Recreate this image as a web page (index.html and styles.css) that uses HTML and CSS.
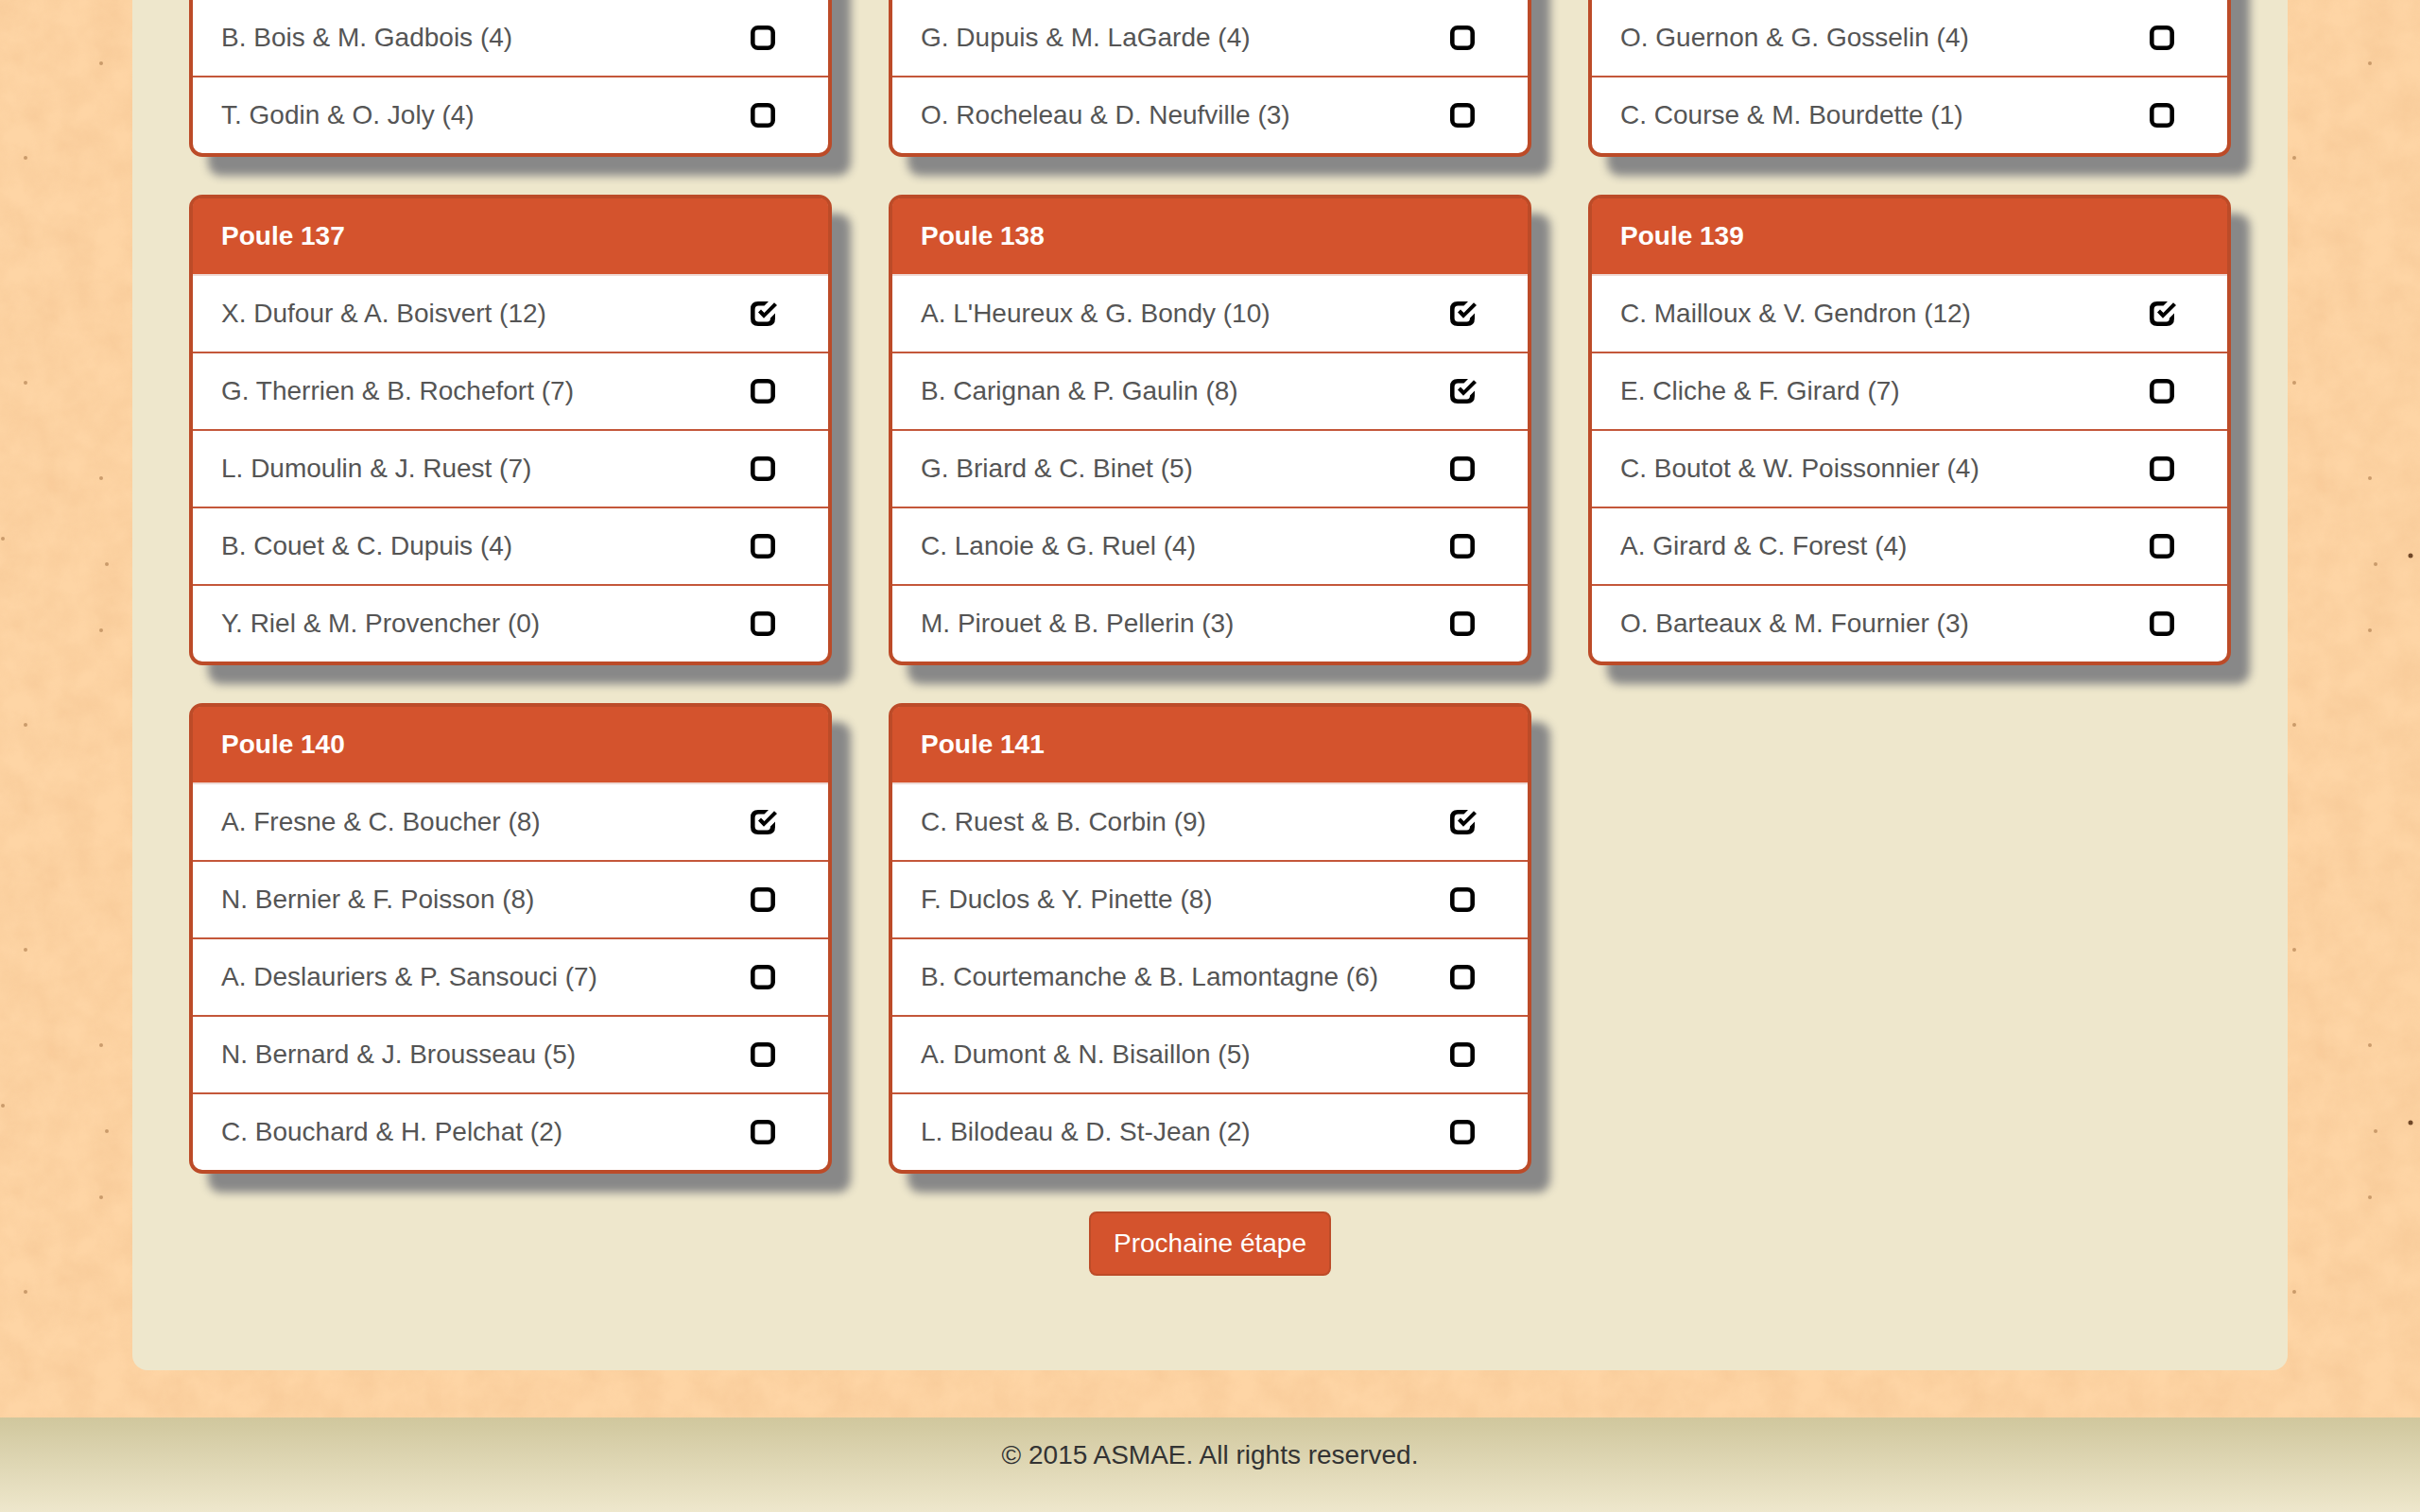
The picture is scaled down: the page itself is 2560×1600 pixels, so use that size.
FILE: index.html
```
<!DOCTYPE html>
<html lang="fr">
<head>
<meta charset="utf-8">
<meta name="viewport" content="width=device-width, initial-scale=1">
<title>ASMAE - Poules</title>
<link rel="stylesheet" href="styles.css">
</head>
<body>
<svg class="sprite" aria-hidden="true">
  <symbol id="box" viewBox="0 0 28 26">
    <rect x="2.300" y="2.300" width="21.400" height="21.400" rx="5.500" fill="none" stroke="#000" stroke-width="4.600"/>
  </symbol>
  <symbol id="box-checked" viewBox="0 0 28 26">
    <path d="M19 0H8Q0 0 0 8v10q0 8 8 8h10q8 0 8-8v-5.500l-5 5Q21 21.400 17.500 21.400h-9Q4.600 21.400 4.600 17.500v-9Q4.600 4.600 8.500 4.600h6z"/>
    <path d="M8 11.500l3-3 3.500 3.500L25 1.200l3 2.900L14 17.700z"/>
  </symbol>
</svg>

<form class="wrap">
  <div class="pools">
    <section class="pool pool-continued">
      <label class="team">B. Bois &amp; M. Gadbois (4)<span class="tick"><input type="checkbox"><svg><use href="#box"/></svg></span></label>
      <label class="team">T. Godin &amp; O. Joly (4)<span class="tick"><input type="checkbox"><svg><use href="#box"/></svg></span></label>
    </section>
    <section class="pool pool-continued">
      <label class="team">G. Dupuis &amp; M. LaGarde (4)<span class="tick"><input type="checkbox"><svg><use href="#box"/></svg></span></label>
      <label class="team">O. Rocheleau &amp; D. Neufville (3)<span class="tick"><input type="checkbox"><svg><use href="#box"/></svg></span></label>
    </section>
    <section class="pool pool-continued">
      <label class="team">O. Guernon &amp; G. Gosselin (4)<span class="tick"><input type="checkbox"><svg><use href="#box"/></svg></span></label>
      <label class="team">C. Course &amp; M. Bourdette (1)<span class="tick"><input type="checkbox"><svg><use href="#box"/></svg></span></label>
    </section>

    <section class="pool">
      <h2 class="pool-title">Poule 137</h2>
      <label class="team">X. Dufour &amp; A. Boisvert (12)<span class="tick"><input type="checkbox" checked><svg><use href="#box-checked"/></svg></span></label>
      <label class="team">G. Therrien &amp; B. Rochefort (7)<span class="tick"><input type="checkbox"><svg><use href="#box"/></svg></span></label>
      <label class="team">L. Dumoulin &amp; J. Ruest (7)<span class="tick"><input type="checkbox"><svg><use href="#box"/></svg></span></label>
      <label class="team">B. Couet &amp; C. Dupuis (4)<span class="tick"><input type="checkbox"><svg><use href="#box"/></svg></span></label>
      <label class="team">Y. Riel &amp; M. Provencher (0)<span class="tick"><input type="checkbox"><svg><use href="#box"/></svg></span></label>
    </section>
    <section class="pool">
      <h2 class="pool-title">Poule 138</h2>
      <label class="team">A. L'Heureux &amp; G. Bondy (10)<span class="tick"><input type="checkbox" checked><svg><use href="#box-checked"/></svg></span></label>
      <label class="team">B. Carignan &amp; P. Gaulin (8)<span class="tick"><input type="checkbox" checked><svg><use href="#box-checked"/></svg></span></label>
      <label class="team">G. Briard &amp; C. Binet (5)<span class="tick"><input type="checkbox"><svg><use href="#box"/></svg></span></label>
      <label class="team">C. Lanoie &amp; G. Ruel (4)<span class="tick"><input type="checkbox"><svg><use href="#box"/></svg></span></label>
      <label class="team">M. Pirouet &amp; B. Pellerin (3)<span class="tick"><input type="checkbox"><svg><use href="#box"/></svg></span></label>
    </section>
    <section class="pool">
      <h2 class="pool-title">Poule 139</h2>
      <label class="team">C. Mailloux &amp; V. Gendron (12)<span class="tick"><input type="checkbox" checked><svg><use href="#box-checked"/></svg></span></label>
      <label class="team">E. Cliche &amp; F. Girard (7)<span class="tick"><input type="checkbox"><svg><use href="#box"/></svg></span></label>
      <label class="team">C. Boutot &amp; W. Poissonnier (4)<span class="tick"><input type="checkbox"><svg><use href="#box"/></svg></span></label>
      <label class="team">A. Girard &amp; C. Forest (4)<span class="tick"><input type="checkbox"><svg><use href="#box"/></svg></span></label>
      <label class="team">O. Barteaux &amp; M. Fournier (3)<span class="tick"><input type="checkbox"><svg><use href="#box"/></svg></span></label>
    </section>

    <section class="pool">
      <h2 class="pool-title">Poule 140</h2>
      <label class="team">A. Fresne &amp; C. Boucher (8)<span class="tick"><input type="checkbox" checked><svg><use href="#box-checked"/></svg></span></label>
      <label class="team">N. Bernier &amp; F. Poisson (8)<span class="tick"><input type="checkbox"><svg><use href="#box"/></svg></span></label>
      <label class="team">A. Deslauriers &amp; P. Sansouci (7)<span class="tick"><input type="checkbox"><svg><use href="#box"/></svg></span></label>
      <label class="team">N. Bernard &amp; J. Brousseau (5)<span class="tick"><input type="checkbox"><svg><use href="#box"/></svg></span></label>
      <label class="team">C. Bouchard &amp; H. Pelchat (2)<span class="tick"><input type="checkbox"><svg><use href="#box"/></svg></span></label>
    </section>
    <section class="pool">
      <h2 class="pool-title">Poule 141</h2>
      <label class="team">C. Ruest &amp; B. Corbin (9)<span class="tick"><input type="checkbox" checked><svg><use href="#box-checked"/></svg></span></label>
      <label class="team">F. Duclos &amp; Y. Pinette (8)<span class="tick"><input type="checkbox"><svg><use href="#box"/></svg></span></label>
      <label class="team">B. Courtemanche &amp; B. Lamontagne (6)<span class="tick"><input type="checkbox"><svg><use href="#box"/></svg></span></label>
      <label class="team">A. Dumont &amp; N. Bisaillon (5)<span class="tick"><input type="checkbox"><svg><use href="#box"/></svg></span></label>
      <label class="team">L. Bilodeau &amp; D. St-Jean (2)<span class="tick"><input type="checkbox"><svg><use href="#box"/></svg></span></label>
    </section>
  </div>
  <button class="next" type="button">Prochaine étape</button>
</form>

<footer class="footer">© 2015 ASMAE. All rights reserved.</footer>
</body>
</html>
```
FILE: styles.css
```
* {
  box-sizing: border-box;
}

body {
  margin: 0;
  min-height: 100vh;
  display: flex;
  flex-direction: column;
  font: 28px/40px "Liberation Sans", Arial, sans-serif;
  color: #333;
  background-color: #fed5a5;
  /* paper grain with a few dark flecks, 600px tile */
  background-image: url("data:image/svg+xml,%3Csvg xmlns='http://www.w3.org/2000/svg' width='600' height='600'%3E%3Cfilter id='n' x='0' y='0' width='100%25' height='100%25' color-interpolation-filters='sRGB'%3E%3CfeTurbulence type='fractalNoise' baseFrequency='.03' numOctaves='4' seed='4' stitchTiles='stitch'/%3E%3CfeColorMatrix values='0 0 0 0 .96 0 0 0 0 .77 0 0 0 0 .57 .8 0 0 0 -.2'/%3E%3C/filter%3E%3Crect width='600' height='600' filter='url(%23n)'/%3E%3Cg fill='%23a87848' fill-opacity='.6'%3E%3Ccircle cx='107' cy='67' r='2'/%3E%3Ccircle cx='27' cy='167' r='2'/%3E%3Ccircle cx='27' cy='405' r='2'/%3E%3Ccircle cx='107' cy='506' r='2'/%3E%3Ccircle cx='3' cy='570' r='2'/%3E%3Ccircle cx='113' cy='597' r='2'/%3E%3C/g%3E%3Ccircle cx='150' cy='588' r='2.500' fill='%23704828'/%3E%3C/svg%3E");
}

.sprite {
  display: none;
}

.wrap {
  margin: 0 140px 50px;
  padding: 0 60px 100px;
  display: flex;
  flex-direction: column;
  gap: 40px;
  background: #eee7cc;
  border-radius: 0 0 16px 16px;
}

.pools {
  display: grid;
  grid-template-columns: repeat(3, 1fr);
  gap: 40px 60px;
}

.pool {
  background: #fff;
  border: 4px solid #bc4b28;
  border-radius: 14px;
  box-shadow: 20px 20px 10px #888;
}

/* upper part of the card lies above the visible area */
.pool-continued {
  margin-top: -46px;
  padding-top: 40px;
}

.pool-title {
  margin: 0;
  padding: 20px 30px;
  font-size: 28px;
  line-height: 40px;
  color: #fff;
  background: #d4532d;
  border-radius: 8px 8px 0 0;
}

.team {
  display: flex;
  align-items: center;
  justify-content: space-between;
  padding: 20px 54px 20px 30px;
  border-top: 2px solid #c4573a;
  color: #555;
}

.pool-title + .team {
  border-top-color: #eedad5;
}

.tick {
  display: grid;
}

.tick > * {
  grid-area: 1 / 1;
  width: 28px;
  height: 26px;
}

.tick input {
  appearance: none;
  margin: 0;
}

.tick svg {
  pointer-events: none;
}

.next {
  align-self: center;
  padding: 12px 24px;
  font: inherit;
  color: #fff;
  background: #d4532d;
  border: 2px solid #bc4b28;
  border-radius: 8px;
}

.footer {
  flex: 1;
  padding: 20px;
  text-align: center;
  background: linear-gradient(#d0c79d, #eee7cc);
}
```
